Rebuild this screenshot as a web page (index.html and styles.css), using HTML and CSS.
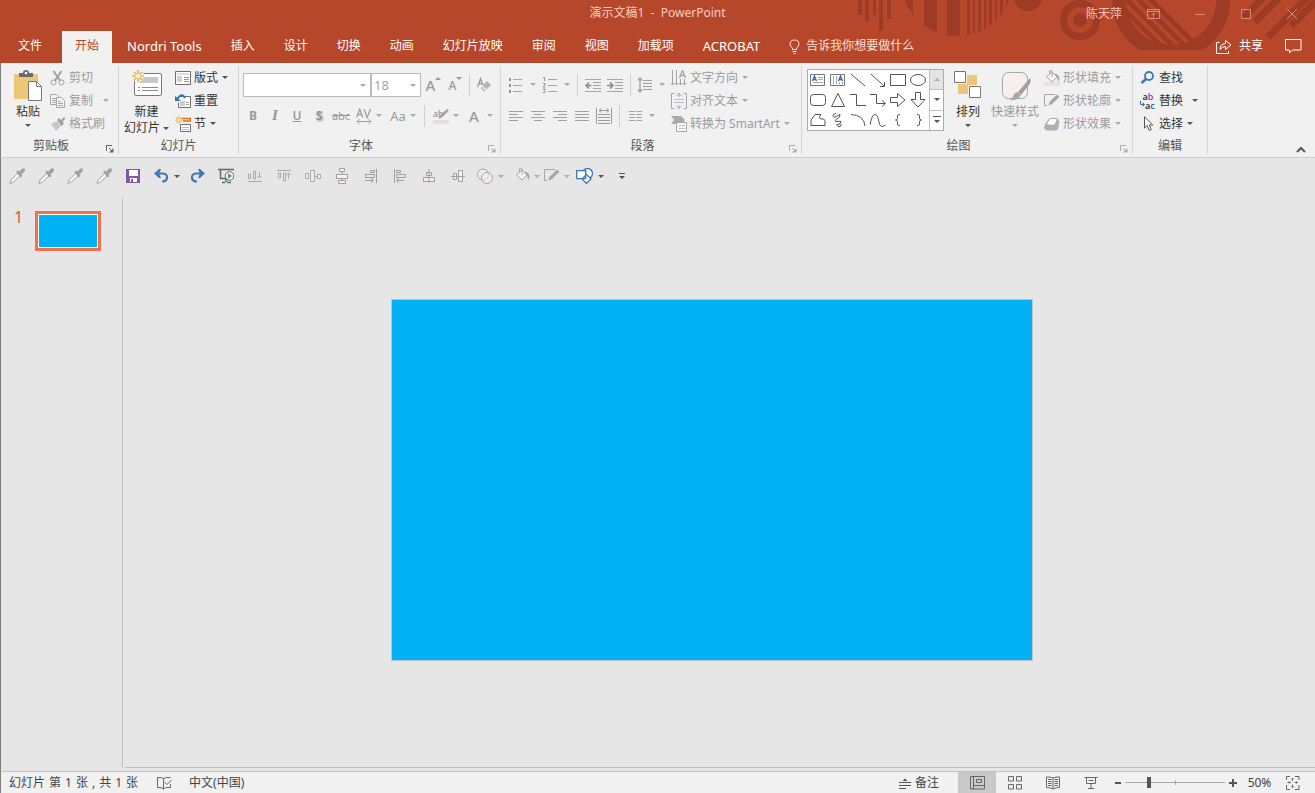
FILE: index.html
```html
<!DOCTYPE html>
<html lang="zh-CN">
<head>
<meta charset="utf-8">
<title>演示文稿1 - PowerPoint</title>
<link rel="stylesheet" href="styles.css">
</head>
<body>
<svg class="defs" width="0" height="0" aria-hidden="true">
  <defs>
    <symbol id="dropper" viewBox="0 0 16 16"><path d="M1 15.500L2 12 8.500 5.500 11 8 4.500 14Z" fill="#f6f6f6" stroke="#a6a6a6"/><path d="M7 4L9 2.500 10.500 3.500 12.500 1Q15-.5 15.800 1 16.500 3 15 4L12.500 6.500 13.500 8 11.800 9.500Z" fill="#a2a2a2"/></symbol>
    <symbol id="launch" viewBox="0 0 8 8"><path d="M.5 6V.5H6M3 3l3 3" fill="none" stroke="currentColor"/><path d="M7.500 3v4.500H3Z" fill="currentColor"/></symbol>
    <symbol id="bucket" viewBox="0 0 16 16"><path d="M0 12h16v4H0Z" fill="#e6e1e6"/><path d="M3 6.500L8 1.800 13 7 8 12 2.500 7Z" fill="#faf3f2" stroke="#a6a6a6"/><path d="M5.500 4V.8H8V7" fill="none" stroke="#a6a6a6"/><path d="M10.500 3.500Q15.500 4.500 15.500 9L14.500 12Q13 10 13.500 8Z" fill="#a6a6a6"/></symbol>
    <symbol id="outline" viewBox="0 0 16 16"><path d="M11 1.500H.5v11H3" fill="none" stroke="#a6a6a6"/><path d="M4.500 12.500L5.500 9 13 1.500 15.500 3.800 8 11Z" fill="#a6a6a6"/></symbol>
    <symbol id="spark" viewBox="0 0 12 12"><path d="M6 0v4M6 8v4M0 6h4M8 6h4M2 2l2.500 2.500M7.500 7.500L10 10M10 2L7.500 4.500M4.500 7.500L2 10" stroke="#eeb44f" stroke-width="1.700" fill="none"/></symbol>
  </defs>
</svg>
<div class="app">
  <header class="header">
    <svg class="pattern" width="460" height="50" viewBox="0 0 460 50" fill="#9d3b24" aria-hidden="true">
      <clipPath id="c1"><circle cx="102" cy="-20" r="56"/></clipPath>
      <clipPath id="c2"><circle cx="316" cy="0" r="46"/></clipPath>
      <path d="M3 0h4v15H3ZM10 0h4v22h-4ZM18 0h3v15h-3ZM24 0h4v31h-4ZM32 0h4v19h-4Z"/>
      <path clip-path="url(#c1)" d="M48 0h10v40H48ZM69 0h13v40H69ZM92 0h13v40H92ZM112 0h3v40h-3ZM118 0h2v40h-2ZM123 0h3v40h-3ZM129 0h2v40h-2ZM134 0h3v40h-3ZM140 0h2v40h-2ZM145 0h3v40h-3ZM151 0h2v40h-2Z"/>
      <circle cx="173" cy="-3" r="14"/>
      <circle cx="225" cy="20" r="16.500" fill="none" stroke="#9d3b24" stroke-width="7"/><circle cx="225" cy="20" r="7"/>
      <circle cx="316" cy="0" r="52" fill="none" stroke="#9d3b24" stroke-width="14"/>
      <path clip-path="url(#c2)" stroke="#9d3b24" stroke-width="5" d="M255-5l60 60M267-5l60 60M279-5l60 60M291-5l60 60"/>
      <path stroke="#9d3b24" stroke-width="7" d="M388 18L410-4M400 22L426-4M413 37L456-6M436 26L464-2"/>
    </svg>
    <div class="titlebar">
      <h1 class="title">演示文稿1 &nbsp;-&nbsp; PowerPoint</h1>
      <div class="window-tools">
        <button class="user">陈天萍</button>
        <button class="win" aria-label="功能区显示选项"><svg width="14" height="12" fill="none" stroke="#d09080"><path d="M.5 1.500h12v9H.5ZM.5 3.500h12M6.500 9.500V5M4.500 7l2-2 2 2"/></svg></button>
        <button class="win" aria-label="最小化"><svg width="12" height="12" stroke="#d09080"><path d="M1 6.500h10"/></svg></button>
        <button class="win" aria-label="最大化"><svg width="12" height="12" fill="none" stroke="#d09080"><path d="M1.500 1.500h9v9h-9Z"/></svg></button>
        <button class="win" aria-label="关闭"><svg width="12" height="12" stroke="#d09080"><path d="M1 1l10 10M11 1L1 11"/></svg></button>
      </div>
    </div>
    <nav class="tabs">
      <button class="tab file">文件</button>
      <button class="tab active">开始</button>
      <button class="tab latin">Nordri Tools</button>
      <button class="tab">插入</button>
      <button class="tab">设计</button>
      <button class="tab">切换</button>
      <button class="tab">动画</button>
      <button class="tab">幻灯片放映</button>
      <button class="tab">审阅</button>
      <button class="tab">视图</button>
      <button class="tab">加载项</button>
      <button class="tab latin">ACROBAT</button>
      <button class="tab tell"><svg width="11" height="15" fill="none" stroke="#fbe9e4"><path d="M3.500 10.500V9Q1 7.500 1 5 1.200 1 5.500 1 9.800 1 10 5 10 7.500 7.500 9v1.500ZM3.500 12.500h4M4.500 14.500h2"/></svg>告诉我你想要做什么</button>
      <button class="tab share"><svg width="16" height="15" fill="none" stroke="#fff"><path d="M3.500 3.500H.5v11h12V12M4 10.500Q4 5 9.500 4.500V1.500L15 6 9.500 10.500V7.500Q6 7.500 4 10.500Z"/></svg>共享</button>
      <button class="tab comment" aria-label="批注"><svg width="17" height="15" fill="none" stroke="#fff"><path d="M.5.5h15.500v10.500H7.500L4.500 14V11h-4Z"/></svg></button>
    </nav>
  </header>

  <section class="ribbon">
    <div class="group clip">
      <div class="body">
        <button class="big"><svg width="28" height="32"><path d="M0 4h24v25H0Z" fill="#edc679"/><path d="M5 7V3h4Q9 0 12 0t3 3h4v4Z" fill="#6a6a6a"/><circle cx="12" cy="3" r="1.300" fill="#fff"/><path d="M14.500 11.500h8l5 5v14h-13Z" fill="#fff" stroke="#777"/><path d="M22.500 11.500v5h5" fill="none" stroke="#777"/></svg><span>粘贴</span><i class="arr"></i></button>
        <div class="stack">
          <button class="small off"><svg width="16" height="16" fill="none" stroke="#a0a0a0"><path d="M3.500 1l6.500 9.500M11.500 1L5 10.500" stroke-width="2"/><circle cx="3.500" cy="12.500" r="2.500"/><circle cx="11.500" cy="12.500" r="2.500"/></svg>剪切</button>
          <button class="small off"><svg width="16" height="16" fill="#f8f3f2" stroke="#a6a6a6"><path d="M.5 1.500h6l2 2v8h-8ZM2 5.500h4M2 7.500h4M2 9.500h4"/><path d="M6.500 4.500h5l3 3v7h-8ZM8 8.500h3M8 10.500h5M8 12.500h5"/></svg>复制<i class="arr far"></i></button>
          <button class="small off"><svg width="16" height="16"><path d="M1 8l6-3 4 5-5 5Z" fill="#c8c8cc"/><path d="M7 4l2-2 2 2 3-3 1.500 1.500-3 3 1.500 2-2.500 2.500Z" fill="#a0a0a0"/></svg>格式刷</button>
        </div>
      </div>
      <h2>剪贴板</h2><button class="launch dark" aria-label="剪贴板选项"><svg width="8" height="8"><use href="#launch"/></svg></button>
    </div>

    <div class="group slides">
      <div class="body">
        <button class="big"><svg width="32" height="32"><rect x="3.500" y="3.500" width="27" height="22" rx="1.500" fill="#fff" stroke="#777"/><path d="M8 7h19v6H8Z" fill="#c8c8c8"/><path d="M7 17.500h2M11 17.500h16M7 20.500h2M11 20.500h16" stroke="#8a8a8a"/><circle cx="7" cy="6" r="6" fill="#f1f1f1"/><svg x="1" y="0" width="12" height="12"><use href="#spark"/></svg></svg><span>新建</span><span>幻灯片<i class="arr"></i></span></button>
        <div class="stack">
          <button class="small"><svg width="16" height="16"><path d="M.5 1.500h15v13H.5Z" fill="#fff" stroke="#6f6f6f"/><path d="M2 4h12" stroke="#bbb"/><path d="M2 6h5v6H2Z" fill="#d0d0d0"/><path d="M9 7.500h5M9 9.500h5M9 11.500h5" stroke="#999"/></svg>版式<i class="arr"></i></button>
          <button class="small"><svg width="16" height="16"><path d="M4.500 3.500h11v11h-12v-5" fill="#fff" stroke="#6f6f6f"/><path d="M5 8h5v5H5Z" fill="#ccc"/><path d="M11 9.500h3M11 11.500h3" stroke="#999"/><path d="M10 5Q7-1 2 6" stroke="#2f74b5" stroke-width="2" fill="none"/><path d="M0 3v5h6Z" fill="#2f74b5"/></svg>重置</button>
          <button class="small"><svg width="16" height="16"><path d="M7 2.500h8.500v2.500H8" fill="none" stroke="#e36c1e" stroke-width="1.300"/><path d="M5.500 8.500h10v7h-10Z" fill="#fff" stroke="#6f6f6f"/><path d="M7 11.500h7M7 13.500h7" stroke="#bbb"/><svg width="8" height="8"><use href="#spark"/></svg></svg>节<i class="arr"></i></button>
        </div>
      </div>
      <h2>幻灯片</h2>
    </div>

    <div class="group font">
      <div class="body rows">
        <div class="row">
          <label class="combo family"><select aria-label="字体" disabled><option></option></select><i class="arr"></i></label><label class="combo size"><select aria-label="字号" disabled><option>18</option></select><i class="arr"></i></label>
          <button class="tool grow" aria-label="增大字号"><span class="cap">A</span><svg width="6" height="10" fill="#999"><path d="M0 4l3-3 3 3Z"/></svg></button>
          <button class="tool grow" aria-label="减小字号"><span class="cap low">A</span><svg width="6" height="10" fill="#999"><path d="M0 1l3 3 3-3Z"/></svg></button>
          <i class="sep"></i>
          <button class="tool" aria-label="清除格式"><svg width="16" height="16"><path d="M.7 10L3.500 1.500 6 8M2 6.500h3" fill="none" stroke="#999" stroke-width="1.300"/><path d="M5.500 8.500L10 4l4 4-4.500 4.500Z" fill="#b5b5b8"/><path d="M3.500 11L5 9.500l3.500 4L7 15Z" fill="#c5c5c8"/></svg></button>
        </div>
        <div class="row">
          <button class="tool"><b>B</b></button><button class="tool"><em>I</em></button><button class="tool"><u>U</u></button><button class="tool"><b class="shadow">S</b></button><button class="tool"><s>abc</s></button>
          <button class="tool split"><svg width="16" height="16" fill="none" stroke="#a0a0a0"><path d="M.7 9.500L3.700 1l3 8.500M2 6.500h4M8 1l3.200 8.500L14.500 1" stroke-width="1.300"/><path d="M1 13.500h14M3.500 11L1 13.500 3.500 16M12.500 11l2.500 2.500-2.500 2.500"/></svg><i class="arr"></i></button>
          <button class="tool split"><span class="aa">Aa</span><i class="arr"></i></button>
          <i class="sep"></i>
          <button class="tool split"><svg width="16" height="16"><path d="M0 12h16v4H0Z" fill="#e4dfe5"/><text x="0" y="9" class="ab">ab</text><path d="M5 11l2-4 7-6 2 1.500L9 9.500Z" fill="#a6a6a6"/></svg><i class="arr"></i></button>
          <button class="tool split wide"><span class="cap">A</span><i class="arr"></i></button>
        </div>
      </div>
      <h2>字体</h2><button class="launch" aria-label="字体选项"><svg width="8" height="8"><use href="#launch"/></svg></button>
    </div>

    <div class="group para">
      <div class="body">
        <div class="rows">
          <div class="row">
            <button class="tool split" aria-label="项目符号"><svg width="16" height="16" stroke="#a6a6a6"><path d="M5 2.500h9M5 8.500h9M5 14.500h9"/><path d="M1 2.500h2M1 8.500h2M1 14.500h2" stroke="#929296" stroke-width="3"/></svg><i class="arr"></i></button>
            <button class="tool split" aria-label="编号"><svg width="16" height="17"><path d="M6 3.500h9M6 9.500h9M6 15.500h9" stroke="#a6a6a6"/><path d="M1 1.500h1.500V5M1 7.500h2v1.500L1 11h2.500M1 13h2.500L2.200 14.500Q4 15 3 16.500H1" fill="none" stroke="#929292"/></svg><i class="arr"></i></button>
            <i class="sep"></i>
            <button class="tool" aria-label="减少缩进"><svg width="16" height="16" stroke="#a6a6a6"><path d="M0 2.500h16M8 5.500h8M8 8.500h8M8 11.500h8M0 14.500h16"/><path d="M1.500 8.500h5M4 5.500L1 8.500l3 3" fill="none" stroke="#8a8a8a" stroke-width="1.500"/></svg></button>
            <button class="tool" aria-label="增加缩进"><svg width="16" height="16" stroke="#a6a6a6"><path d="M0 2.500h16M8 5.500h8M8 8.500h8M8 11.500h8M0 14.500h16"/><path d="M0 8.500h5.500M3 5.500L6 8.500l-3 3" fill="none" stroke="#8a8a8a" stroke-width="1.500"/></svg></button>
            <i class="sep"></i>
            <button class="tool split" aria-label="行距"><svg width="16" height="16" fill="none" stroke="#a0a0a0"><path d="M6 3.500h9M6 6.500h9M6 9.500h9M6 12.500h9"/><path d="M3 1v14M1 3.500L3 1l2 2.500M1 12.500L3 15l2-2.500" stroke-width="1.300"/></svg><i class="arr"></i></button>
          </div>
          <div class="row">
            <button class="tool" aria-label="左对齐"><svg width="16" height="12" stroke="#a0a0a0"><path d="M1 1.500h14M1 4.500h9M1 7.500h14M1 10.500h9"/></svg></button>
            <button class="tool" aria-label="居中"><svg width="16" height="12" stroke="#a0a0a0"><path d="M1 1.500h14M4 4.500h8M1 7.500h14M4 10.500h8"/></svg></button>
            <button class="tool" aria-label="右对齐"><svg width="16" height="12" stroke="#a0a0a0"><path d="M1 1.500h14M6 4.500h9M1 7.500h14M6 10.500h9"/></svg></button>
            <button class="tool" aria-label="两端对齐"><svg width="16" height="12" stroke="#a0a0a0"><path d="M1 1.500h14M1 4.500h14M1 7.500h14M1 10.500h14"/></svg></button>
            <button class="tool" aria-label="分散对齐"><svg width="16" height="16" fill="none" stroke="#9a9a9a"><path d="M.5 0v16M15.500 0v16M2 6.500h12M2 9.500h12M2 12.500h12M2 15.500h12M3 2.500h10M5.500.5l-2.500 2 2.500 2M10.500.5l2.500 2-2.500 2"/></svg></button>
            <i class="sep"></i>
            <button class="tool split" aria-label="分栏"><svg width="16" height="12" stroke="#a6a6a6"><path d="M2 1.500h6M9 1.500h6M2 4.500h6M9 4.500h6M2 7.500h6M9 7.500h6M2 10.500h6M9 10.500h6"/></svg><i class="arr"></i></button>
          </div>
        </div>
        <div class="stack">
          <button class="small off"><svg width="16" height="16" fill="none" stroke="#a6a6a6"><path d="M1.500 0v15M5.500 0v15M9.500 9v6M13.500 9v6M0 13l1.500 2L3 13M4 13l1.500 2L7 13M8 13l1.500 2 1.500-2M12 13l1.500 2 1.500-2"/><path d="M8.500 8l3-7.500 3 7.500M9.500 5.500h4" stroke-width="1.400"/></svg>文字方向<i class="arr"></i></button>
          <button class="small off"><svg width="16" height="16" fill="none" stroke="#a6a6a6"><path d="M3.500.5h-3v15h3M12.500.5h3v15h-3M8 0v4M5.500 3L8 .5 10.500 3M8 12v4M5.500 13L8 15.500 10.500 13"/><path d="M3 6.500h10M3 9.500h10" stroke="#c7bccb"/></svg>对齐文本<i class="arr"></i></button>
          <button class="small off"><svg width="16" height="16"><path d="M0 0h10l4 4-3 4H0l3-4Z" fill="#aaa"/><path d="M5.500 6.500h10v9h-10Z" fill="#fff8f6" stroke="#a6a6a6"/><path d="M8 9.500h2M11 9.500h3M8 12.500h2M11 12.500h3" stroke="#b8afc4"/></svg>转换为 SmartArt<i class="arr"></i></button>
        </div>
      </div>
      <h2>段落</h2><button class="launch" aria-label="段落选项"><svg width="8" height="8"><use href="#launch"/></svg></button>
    </div>

    <div class="group draw">
      <div class="body">
        <div class="gallery">
          <div class="shapes">
            <button aria-label="文本框"><svg width="16" height="16"><path d="M.5 2.500h14v11H.5Z" fill="#fff" stroke="#777"/><path d="M2.500 9L4.500 4l2 5M3 7.500h3" fill="none" stroke="#2f6db0" stroke-width="1.300"/><path d="M8 5.500h5M8 7.500h5M3 10.500h10" stroke="#aaa"/></svg></button>
            <button aria-label="竖排文本框"><svg width="16" height="16"><path d="M.5 2.500h14v11H.5Z" fill="#fff" stroke="#777"/><path d="M8.500 9l2-5 2 5M9 7.500h3" fill="none" stroke="#2f6db0" stroke-width="1.300"/><path d="M3.500 4v8M6.500 4v8M9.500 10v2M12.500 10v2" stroke="#aaa"/></svg></button>
            <button aria-label="直线"><svg width="16" height="16" stroke="#555"><path d="M1 2l14 12"/></svg></button>
            <button aria-label="箭头"><svg width="16" height="16" stroke="#555" fill="none"><path d="M1 2l13 12M14.500 10v4.500H10"/></svg></button>
            <button aria-label="矩形"><svg width="16" height="16" stroke="#555" fill="none"><path d="M.5 2.500h15v11H.5Z"/></svg></button>
            <button aria-label="椭圆"><svg width="16" height="16" stroke="#555" fill="none"><ellipse cx="8" cy="8" rx="7.500" ry="5.500"/></svg></button>
            <button aria-label="圆角矩形"><svg width="16" height="16" stroke="#555" fill="none"><rect x=".5" y="2.500" width="15" height="11" rx="3"/></svg></button>
            <button aria-label="三角形"><svg width="16" height="16" stroke="#555" fill="none"><path d="M8 1.500L14.500 14.500h-13Z"/></svg></button>
            <button aria-label="肘形连接符"><svg width="16" height="16" stroke="#555" fill="none"><path d="M0 2.500h6.500v11H16"/></svg></button>
            <button aria-label="肘形箭头连接符"><svg width="16" height="16" stroke="#555" fill="none"><path d="M0 2.500h6.500v9H15M12 8.500l3.500 3-3.500 3"/></svg></button>
            <button aria-label="右箭头"><svg width="16" height="16" stroke="#555" fill="none"><path d="M.5 5.500h7V1.500L15 8 7.500 14.500V10.500h-7Z"/></svg></button>
            <button aria-label="下箭头"><svg width="16" height="16" stroke="#555" fill="none"><path d="M5.500.5v7H1L8 15 15 7.500H10.500v-7Z"/></svg></button>
            <button aria-label="任意多边形"><svg width="16" height="16" stroke="#555" fill="none"><path d="M1 13.500V8L5 2.500H11Q8 6 11 7q4-1 4 3v3.500Z"/></svg></button>
            <button aria-label="自由曲线"><svg width="16" height="16" stroke="#555" fill="none"><path d="M6 1.500Q1 3 4 5.500 7 4 10 2.500 11 5 6 7.500 4 10 7 9.500t4 0Q10 13 7.500 12.500T9 15Q12 14 11 12"/></svg></button>
            <button aria-label="弧形"><svg width="16" height="16" stroke="#555" fill="none"><path d="M1 2.500Q14 3 15 14"/></svg></button>
            <button aria-label="曲线"><svg width="16" height="16" stroke="#555" fill="none"><path d="M0 13Q2 2 5 2.500T9 10t6.500 3"/></svg></button>
            <button aria-label="左大括号"><svg width="16" height="16" stroke="#555" fill="none"><path d="M10 2.500H8.500Q7.500 2.500 7.500 4v2.500Q7.500 8 5.500 8 7.500 8 7.500 9.500V12q0 1.500 1 1.500H10"/></svg></button>
            <button aria-label="右大括号"><svg width="16" height="16" stroke="#555" fill="none"><path d="M7 2.500h1.500q1 0 1 1.500v2.500Q9.500 8 11.500 8 9.500 8 9.500 9.500V12q0 1.500-1 1.500H7"/></svg></button>
          </div>
          <div class="scroll">
            <button class="up" aria-label="上一行"><svg width="6" height="3" fill="#aaa"><path d="M0 3l3-3 3 3Z"/></svg></button>
            <button aria-label="下一行"><i class="arr"></i></button>
            <button aria-label="其他"><svg width="8" height="8" fill="#555"><path d="M0 0h8v1H0ZM1 4h6L4 7Z"/></svg></button>
          </div>
        </div>
        <button class="big"><svg width="28" height="32"><path d="M13 5h10v10H13ZM4 14h10v10H4Z" fill="#edc679"/><path d="M.5 1.500h11v11H.5ZM15.500 16.500h11v11h-11Z" fill="#fff" stroke="#777"/></svg><span>排列</span><i class="arr"></i></button>
        <button class="big off"><svg width="32" height="32"><rect x="3.500" y="2.500" width="25" height="26" rx="6" fill="#f7efed" stroke="#a6a6a6"/><path d="M31 8q1.500 3-1 7l-8 10-3-3Z" fill="#a0a0a0"/><path d="M18 22l4 3q-3 6-12 5 4-1 4-4 1-3 4-4Z" fill="#a8a8aa"/></svg><span>快速样式</span><i class="arr"></i></button>
        <div class="stack">
          <button class="small off"><svg width="16" height="16"><use href="#bucket"/></svg>形状填充<i class="arr"></i></button>
          <button class="small off"><svg width="16" height="16"><use href="#outline"/></svg>形状轮廓<i class="arr"></i></button>
          <button class="small off"><svg width="16" height="16"><path d="M0 12L1 8 5 3l9 0 1.500 3-1.500 7-2 1.500H2Z" fill="#b0b0b0"/><path d="M2 9L5 3.500Q5.500 2.500 7 2.500h5q2 0 1 2L10.500 9.500Z" fill="#fcf8f7" stroke="#a6a6a6"/></svg>形状效果<i class="arr"></i></button>
        </div>
      </div>
      <h2>绘图</h2><button class="launch" aria-label="绘图选项"><svg width="8" height="8"><use href="#launch"/></svg></button>
    </div>

    <div class="group edit">
      <div class="body">
        <div class="stack">
          <button class="small"><svg width="16" height="16" fill="none" stroke="#3b76b5"><circle cx="9" cy="6" r="4" stroke-width="1.800"/><path d="M6 9L1.500 13" stroke-width="2.600"/></svg>查找</button>
          <button class="small"><span class="swap"><span class="from">a<span class="b">b</span></span><span class="to"><svg width="5" height="6" fill="none" stroke="#2f6db0"><path d="M.5 0v3.500h3.500M2.500 1.500l2 2-2 2"/></svg>a<span class="c">c</span></span></span>替换<i class="arr gap"></i></button>
          <button class="small"><svg width="16" height="16"><path d="M4.500.8V12l2.800-2.500 2 5 2-1-2-4.500h3.500Z" fill="#fff" stroke="#555"/></svg>选择<i class="arr"></i></button>
        </div>
      </div>
      <h2>编辑</h2>
    </div>
    <button class="collapse" aria-label="折叠功能区"><svg width="10" height="7" fill="none" stroke="#555" stroke-width="2"><path d="M1 6l4-4 4 4"/></svg></button>
  </section>

  <div class="quick">
    <button class="q" aria-label="取色器 1"><svg width="16" height="16"><use href="#dropper"/></svg></button>
    <button class="q" aria-label="取色器 2"><svg width="16" height="16"><use href="#dropper"/></svg></button>
    <button class="q" aria-label="取色器 3"><svg width="16" height="16"><use href="#dropper"/></svg></button>
    <button class="q" aria-label="取色器 4"><svg width="16" height="16"><use href="#dropper"/></svg></button>
    <button class="q" aria-label="保存"><svg width="14" height="14"><path d="M0 0h14v14H0Z" fill="#8455a8"/><path d="M3 1h9v6H3ZM4 9h7v4H4Z" fill="#fff"/><path d="M5 10h2v3H5Z" fill="#8455a8"/></svg></button>
    <button class="q two in" aria-label="撤消"><svg width="16" height="14"><path d="M2 4.500H9Q13.500 5 13 9 12.500 12.500 8 12.500" fill="none" stroke="#3f78b4" stroke-width="2.200"/><path d="M0 4.500L5 0H7L5 4.500 7 9H5Z" fill="#3f78b4"/></svg><i class="arr"></i></button>
    <button class="q" aria-label="恢复"><svg width="16" height="14"><path d="M14 4.500H7Q2.500 5 3 9 3.500 12.500 8 12.500" fill="none" stroke="#3f78b4" stroke-width="2.200"/><path d="M16 4.500L11 0H9l2 4.500L9 9h2Z" fill="#3f78b4"/></svg></button>
    <button class="q" aria-label="从头开始放映"><svg width="16" height="16"><path d="M0 1.500h16M2.500 2v8.500H8M8 10v4M4 14.500h3M9 14.500h4" fill="none" stroke="#666" stroke-width="1.500"/><circle cx="11.500" cy="8" r="4.300" fill="#f5f5f5" stroke="#666"/><path d="M10 5l4 3-4 3Z" fill="#4b9b80"/></svg></button>
    <button class="q" aria-label="底端对齐"><svg width="16" height="14" fill="none" stroke="#aaa"><path d="M1 12.500h14M1.500 5v4.500h2V5ZM6.500 2v8h2V2ZM12.500 3v6M10.500 7l2 2 2-2"/></svg></button>
    <button class="q" aria-label="顶端对齐"><svg width="16" height="14" fill="none" stroke="#aaa"><path d="M1 1.500h14M2.500 4v5h2V4ZM7.500 4v8h2V4ZM12.500 10V4M10.500 6l2-2 2 2"/></svg></button>
    <button class="q" aria-label="横向分布"><svg width="16" height="14" fill="#f2eded" stroke="#aaa"><path d="M.5 4.500h3v5h-3ZM5.500 1.500h4v11h-4ZM12.500 5.500h3v4h-3ZM10 7.500h2"/></svg></button>
    <button class="q" aria-label="纵向分布"><svg width="16" height="16" fill="#f7efee" stroke="#a0a0a0"><path d="M5.500.5h5v3h-5ZM2.500 6.500h11v4h-11ZM4.500 12.500h7v3h-7ZM8 4v2M8 11v1"/></svg></button>
    <button class="q" aria-label="右对齐形状"><svg width="16" height="16" fill="none" stroke="#a0a0a0"><path d="M13.500 1v14M7.500 2.500h4v2h-4ZM2.500 6.500h9v3h-9ZM2 12.500h8M8 10l2.500 2.500L8 15"/></svg></button>
    <button class="q" aria-label="左对齐形状"><svg width="16" height="16" fill="none" stroke="#a0a0a0"><path d="M2.500 1v14M4.500 2.500h4v2h-4ZM4.500 6.500h9v3h-9ZM5 12.500h7M7 10l-2.500 2.500L7 15"/></svg></button>
    <button class="q" aria-label="水平居中"><svg width="16" height="16" fill="#f7efee" stroke="#a0a0a0"><path d="M8 1v14M5.500 4.500h5v3h-5ZM2.500 9.500h11v4h-11Z"/></svg></button>
    <button class="q" aria-label="垂直居中"><svg width="16" height="14" fill="#f7efee" stroke="#a0a0a0"><path d="M1 7.500h14M3.500 4.500h3v6h-3ZM8.500 1.500h4v11h-4Z"/></svg></button>
    <button class="q two" aria-label="合并形状"><svg width="18" height="16" fill="#f7efee" fill-opacity=".5" stroke="#a6a6a6"><circle cx="7" cy="6.500" r="5.500"/><circle cx="11" cy="10" r="5.500"/></svg><i class="arr pale"></i></button>
    <button class="q two in" aria-label="形状填充"><svg width="16" height="16"><use href="#bucket"/></svg><i class="arr pale"></i></button>
    <button class="q two slim" aria-label="形状轮廓"><svg width="16" height="16"><use href="#outline"/></svg><i class="arr pale"></i></button>
    <button class="q two" aria-label="形状"><svg width="18" height="16" fill="#fff" stroke="#3f78b4" stroke-width="1.300"><circle cx="11.500" cy="5.500" r="5"/><path d="M.7 2.700h9v8h-9ZM10.500 6.500l4.500 4.500-4.500 4.500L6 11Z"/></svg><i class="arr"></i></button>
    <button class="q" aria-label="自定义快速访问工具栏"><svg width="6" height="7" fill="#555"><path d="M0 0h6v1H0ZM0 3h6L3 6Z"/></svg></button>
  </div>

  <main class="workspace">
    <aside class="thumbs">
      <span class="num">1</span>
      <button class="thumb" aria-label="幻灯片 1"></button>
    </aside>
    <div class="stage"><div class="slide"></div></div>
  </main>

  <footer class="status">
    <span class="count"><span>幻灯片</span> <span>第</span> <span>1</span> <span>张</span> <span>,</span> <span>共</span> <span>1</span> <span>张</span></span>
    <button class="proof" aria-label="拼写检查"><svg width="15" height="14" fill="none" stroke="#666"><path d="M6.500 2.500Q4 1 .5 1.500v10q4-.5 6 1.500 2-2 4.500-1.500M6.500 2.500V13M6.500 2.500Q9 1 13.500 1.500M13.500 8v3.500H11M7.500 6l2.500 2.500L14.500 4"/></svg></button>
    <button class="lang">中文(中国)</button>
    <button class="notes"><svg width="12" height="12" stroke="#555"><path d="M0 5.500h12M0 8.500h12M0 11.500h7"/><path d="M3.500 4L6 1.500 8.500 4Z" fill="#555" stroke="none"/></svg>备注</button>
    <button class="view on" aria-label="普通视图"><svg width="15" height="14" fill="none" stroke="#666"><path d="M.5.500h14v12.500H.5ZM3.500.5v12.500M3.500 9.500h11M6.500 3.500h5v3h-5Z"/></svg></button>
    <button class="view" aria-label="幻灯片浏览"><svg width="15" height="14" fill="none" stroke="#666"><path d="M.5.500h5v4.500h-5ZM8.500.5h5v4.500h-5ZM.5 8.500h5V13h-5ZM8.500 8.500h5V13h-5Z"/></svg></button>
    <button class="view" aria-label="阅读视图"><svg width="15" height="14" fill="none" stroke="#666"><path d="M7 2Q4 .5.500 1v10.500q4 0 6.500 1.500 2.500-1.500 6.500-1.500V1Q10 .5 7 2v11M2 3.500h3.500M2 5.500h3.500M2 7.500h3.500M2 9.500h3.500M8.500 3.500H12M8.500 5.500H12M8.500 7.500H12M8.500 9.500H12"/></svg></button>
    <button class="view" aria-label="幻灯片放映"><svg width="15" height="14" fill="none" stroke="#666"><path d="M.5 1.500h13M2.500 2v5.500h9V2M7 8v4M4 12.500h6M4.500 4.500h5"/></svg></button>
    <button class="zoom-btn" aria-label="缩小"><svg width="6" height="2"><path d="M0 0h6v2H0Z" fill="#555"/></svg></button>
    <input class="slider" type="range" min="0" max="100" value="23" aria-label="显示比例">
    <button class="zoom-btn" aria-label="放大"><svg width="8" height="8"><path d="M3 0h2v3h3v2H5v3H3V5H0V3h3Z" fill="#555"/></svg></button>
    <button class="percent">50%</button>
    <button class="fit" aria-label="适应窗口"><svg width="14" height="14" fill="none" stroke="#666"><path d="M4 .5H.5V4M9 .5h4V4M4 13.500H.5V9M9 13.500h4V9M6.500 2v3M6.500 8.500v3M2 6.500h3M8.500 6.500h3M5.500 3l1-1 1 1M5.500 10.500l1 1 1-1M3 5.500l-1 1 1 1M10.500 5.500l1 1-1 1"/></svg></button>
  </footer>
</div>
</body>
</html>
```
FILE: styles.css
```css
* { box-sizing: border-box; }
body { margin: 0; }
.app {
  display: flex;
  flex-direction: column;
  min-height: 100vh;
  font: 12px/18px "Noto Sans", "Noto Sans CJK SC", sans-serif;
  color: #333;
  background: #e6e6e6;
}
button {
  font: inherit;
  color: inherit;
  background: none;
  border: 0;
  padding: 0;
  display: flex;
  align-items: center;
  white-space: nowrap;
}
svg { flex: none; }
.defs { position: absolute; }

/* Title bar and tabs */
.header { position: relative; background: #b7472a; color: #fff; overflow: hidden; }
.pattern { position: absolute; top: 0; right: 0; }
.titlebar { position: relative; height: 31px; display: flex; justify-content: center; }
.title { margin: 0; padding-top: 4px; font: inherit; color: #f8cdc0; }
.window-tools { position: absolute; right: 0; top: 0; height: 27px; display: flex; }
.user { color: #f5c3b4; margin-right: 9px; }
.win { width: 46px; justify-content: center; }
.tabs { position: relative; display: flex; gap: 1px; height: 32px; padding-left: 4px; }
.tab { padding: 0 14px 2px; }
.tab.latin { font-size: 13px; }
.tab.file { margin-right: 5px; }
.tab.active { background: #f1f1f1; color: #b7472a; padding: 0 13px 2px; }
.tab.tell { gap: 6px; color: #fbe0d8; }
.tab.share { margin-left: auto; gap: 7px; padding-right: 21px; }
.tab.comment { padding: 0 13px 2px 0; }

/* Ribbon */
.ribbon {
  display: flex;
  position: relative;
  height: 95px;
  background: #f1f1f1;
  border-left: 1px solid #7b7b7b;
  border-bottom: 1px solid #d0d0d0;
}
.group {
  position: relative;
  display: flex;
  flex-direction: column;
  margin: 3px 0;
  border-right: 1px solid #d5d5d5;
}
.clip { width: 118px; }
.slides { width: 120px; }
.font { width: 262px; }
.para { width: 301px; }
.draw { width: 331px; }
.edit { width: 75px; }
.body { flex: 1; display: flex; }
.group h2 { margin: 0; font: inherit; line-height: 16px; text-align: center; color: #555; }
.clip h2, .font h2, .para h2, .draw h2 { padding-right: 17px; }
.launch { position: absolute; right: 4px; bottom: 1px; color: #aaa; }
.launch.dark { color: #666; }
.arr { flex: none; border: 3px solid transparent; border-top-color: #555; border-bottom: 0; width: 6px; height: 3px; display: inline-block; }
.arr.pale, .off .arr, .tool .arr, .combo .arr { border-top-color: #aaa; }
.off { color: #9b9b9b; }
.stack { display: flex; flex-direction: column; }
.small { height: 23px; gap: 3px; }
.small .arr { margin-left: 1px; }
.small .arr.far { margin-left: 7px; }
.small .arr.gap { margin-left: 6px; }
.big { flex-direction: column; padding-top: 4px; line-height: 16px; }
.big svg { margin-bottom: 2px; }
.big span { display: flex; align-items: center; gap: 3px; }
.big > .arr { margin-top: 4px; }
.clip .big { width: 54px; }
.clip .stack { margin-left: -5px; }
.slides .big { width: 55px; }
.slides .stack { margin-left: 1px; }

.rows { flex-direction: column; padding-top: 3px; }
.row { display: flex; align-items: center; height: 31px; padding-left: 3px; }
.sep { width: 1px; height: 22px; background: #d0d0d0; margin: 0 4px; }
.combo { position: relative; height: 24px; }
.combo select {
  appearance: none;
  width: 100%;
  height: 100%;
  border: 1px solid #bbb;
  border-radius: 0;
  background: #fff;
  color: #a6a6a6;
  font: inherit;
  font-size: 13px;
  padding: 0 2px;
  opacity: 1;
}
.combo .arr { position: absolute; right: 5px; top: 11px; }
.family { width: 128px; margin-left: 1px; }
.size { width: 50px; }
.tool { width: 22px; height: 24px; justify-content: center; color: #999; flex: none; }
.tool em, .tool u { font-weight: 600; }
.tool em { font-family: "DejaVu Serif", serif; }
.tool s { font-size: 11px; }
.tool.grow { align-items: flex-start; padding-left: 3px; }
.tool.grow svg { margin-top: 3px; }
.cap { font-size: 15px; font-weight: 500; line-height: 24px; }
.cap.low { font-size: 12px; line-height: 26px; }
.shadow { text-shadow: 1px 1px 2px #999; }
.tool.split { width: 34px; gap: 4px; }
.tool.split.wide { width: 36px; gap: 8px; }
.aa { font-size: 13px; }
.ab { font: 9px "Noto Sans", sans-serif; fill: #888; }
.para .rows { width: 167px; }
.para .row { padding-left: 4px; }
.para .tool.split { gap: 6px; }
.para .stack { margin-left: 3px; }

.gallery { display: flex; margin: 3px 10px 0 5px; height: 62px; border: 1px solid #ababab; background: #fff; }
.shapes { display: grid; grid-template-columns: repeat(6, 20px); width: 121px; }
.shapes button { justify-content: center; }
.scroll { display: flex; flex-direction: column; width: 14px; border-left: 1px solid #c0c0c0; }
.scroll button { flex: 1; justify-content: center; }
.scroll button + button { border-top: 1px solid #c0c0c0; }
.scroll .up { background: #e4e4e4; }
.draw .stack { margin-left: 5px; }
.draw .big.off { margin-left: 9px; }
.edit .stack { margin-left: 7px; }
.swap { display: flex; flex-direction: column; width: 16px; font-size: 9px; font-weight: 600; line-height: 9px; }
.swap .b { color: #8c4fb0; }
.swap .c { color: #2f6db0; }
.swap .to { display: flex; }
.collapse { position: absolute; right: 9px; bottom: 4px; }

/* Quick access toolbar */
.quick { display: flex; height: 36px; padding-left: 1px; border-left: 1px solid #7b7b7b; }
.q { width: 29px; justify-content: center; }
.q.two { width: 35px; gap: 4px; }
.q.in { padding-left: 4px; }
.q.two.slim { width: 30px; }

/* Workspace */
.workspace { flex: 1; display: flex; padding: 3px 0; border-left: 1px solid #7b7b7b; }
.thumbs { width: 122px; display: flex; align-items: flex-start; padding: 14px 0 0 13px; border-right: 1px solid #c0c0c0; }
.num { width: 21px; font-size: 16px; line-height: 12px; color: #d8583a; }
.thumb { width: 66px; height: 40px; border: 3px solid #f1714f; background: #02b0f4; box-shadow: inset 0 0 0 1px #fff; }
.stage { flex: 1; display: flex; align-items: center; justify-content: center; margin-left: 2px; padding: 0 16px 4px 0; border-bottom: 1px solid #bdbdbd; }
.slide { width: 54.7%; aspect-ratio: 16 / 9; background: #02b0f4; border: 1px solid #b5c6cf; }

/* Status bar */
.status { display: flex; height: 22px; padding: 0 15px 0 8px; background: #f1f1f1; border-top: 1px solid #c3c3c3; border-left: 1px solid #7b7b7b; color: #444; align-items: stretch; }
.count { display: flex; gap: 4px; line-height: 21px; }
.proof { margin: 0 17px 0 19px; }
.notes { margin-left: auto; margin-right: 19px; gap: 4px; }
.view { width: 38px; justify-content: center; }
.view.on { background: #c9c9c9; }
.zoom-btn { width: 15px; justify-content: center; }
.slider {
  appearance: none;
  width: 100px;
  height: 21px;
  margin: 0;
  background: linear-gradient(#aaa, #aaa) center / 100% 1px no-repeat, linear-gradient(#aaa, #aaa) center / 1px 5px no-repeat;
}
.slider::-webkit-slider-thumb { appearance: none; width: 4px; height: 11px; background: #555; }
.percent { width: 39px; justify-content: center; }
.fit { margin-left: 7px; }
```
